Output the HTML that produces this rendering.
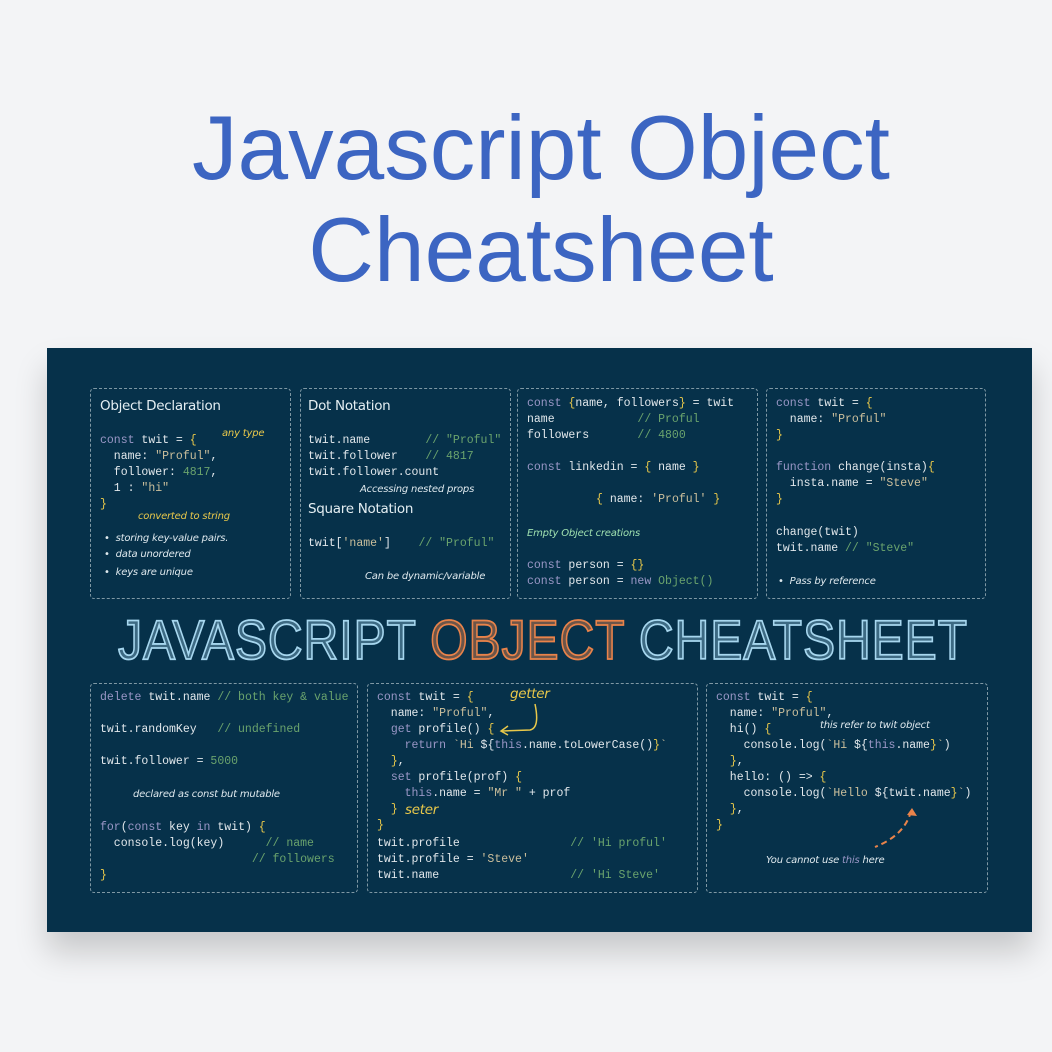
<!DOCTYPE html>
<html><head><meta charset="utf-8">
<style>
*{margin:0;padding:0;box-sizing:border-box}
body{width:1052px;height:1052px;background:#f3f4f6;position:relative;overflow:hidden;font-family:"Liberation Sans",sans-serif}
.t{position:absolute;left:15px;width:1052px;text-align:center;color:#3c65c2;font-size:91px;line-height:100px;white-space:nowrap}
.panel{position:absolute;left:47px;top:348px;width:985px;height:584px;background:#06314a;box-shadow:0 20px 30px rgba(0,0,0,0.18)}
.b{position:absolute;border:1.5px dashed #7f98a4;border-radius:4px}
.l{position:absolute;font-family:"Liberation Mono",monospace;font-size:11.5px;line-height:16px;color:#e2e8ec;white-space:pre}
.k{color:#9a97c6}.s{color:#cbbf9c}.c{color:#6aa36d}.y{color:#e8c84a}
.h{position:absolute;font-family:"DejaVu Sans",sans-serif;font-style:italic;font-size:10px;line-height:14px;color:#dfe9ee;white-space:pre;letter-spacing:-0.2px}
.hd{position:absolute;font-family:"DejaVu Sans",sans-serif;font-size:13.5px;color:#e4eef2;white-space:pre;letter-spacing:-0.3px}
.big{position:absolute;left:118px;top:610px;font-family:"Liberation Sans Narrow","Liberation Sans",sans-serif;font-size:56px;line-height:60px;color:rgba(167,215,239,0.35);-webkit-text-stroke:1.8px #a7d7ef;white-space:nowrap;letter-spacing:1px;transform-origin:0 0}
</style></head><body>
<div class="t" style="top:99px">Javascript Object</div>
<div class="t" style="top:201px">Cheatsheet</div>

<div class="panel"></div>
<div class="b" style="left:90px;top:388px;width:201px;height:211px"></div>
<div class="b" style="left:300px;top:388px;width:211px;height:211px"></div>
<div class="b" style="left:517px;top:388px;width:241px;height:211px"></div>
<div class="b" style="left:766px;top:388px;width:220px;height:211px"></div>
<div class="b" style="left:90px;top:683px;width:268px;height:210px"></div>
<div class="b" style="left:367px;top:683px;width:331px;height:210px"></div>
<div class="b" style="left:706px;top:683px;width:282px;height:210px"></div>

<!-- box1 -->
<div class="hd" style="left:100px;top:398px">Object Declaration</div>
<div class="l" style="left:100px;top:433px"><span class="k">const</span> twit = <span class="y">{</span></div>
<div class="l" style="left:100px;top:449px">  name: <span class="s">"Proful"</span>,</div>
<div class="l" style="left:100px;top:465px">  follower: <span class="c">4817</span>,</div>
<div class="l" style="left:100px;top:481px">  1 : <span class="s">"hi"</span></div>
<div class="l" style="left:100px;top:497px"><span class="y">}</span></div>
<div class="h y" style="left:222px;top:427px;color:#e8c84a">any type</div>
<div class="h" style="left:138px;top:510px;color:#e8c84a">converted to string</div>
<div class="h" style="left:104px;top:532px">•  storing key-value pairs.</div>
<div class="h" style="left:104px;top:548px">•  data unordered</div>
<div class="h" style="left:104px;top:566px">•  keys are unique</div>

<!-- box2 -->
<div class="hd" style="left:308px;top:398px">Dot Notation</div>
<div class="l" style="left:308px;top:433px">twit.name        <span class="c">// "Proful"</span></div>
<div class="l" style="left:308px;top:449px">twit.follower    <span class="c">// 4817</span></div>
<div class="l" style="left:308px;top:465px">twit.follower.count</div>
<div class="h" style="left:360px;top:483px">Accessing nested props</div>
<div class="hd" style="left:308px;top:501px">Square Notation</div>
<div class="l" style="left:308px;top:536px">twit[<span class="s">'name'</span>]    <span class="c">// "Proful"</span></div>
<div class="h" style="left:365px;top:570px">Can be dynamic/variable</div>

<!-- box3 -->
<div class="l" style="left:527px;top:396px"><span class="k">const</span> <span class="y">{</span>name, followers<span class="y">}</span> = twit</div>
<div class="l" style="left:527px;top:412px">name            <span class="c">// Proful</span></div>
<div class="l" style="left:527px;top:428px">followers       <span class="c">// 4800</span></div>
<div class="l" style="left:527px;top:460px"><span class="k">const</span> linkedin = <span class="y">{</span> name <span class="y">}</span></div>
<div class="l" style="left:527px;top:492px">          <span class="y">{</span> name: <span class="s">'Proful'</span> <span class="y">}</span></div>
<div class="h" style="left:527px;top:527px;color:#9fe0b0">Empty Object creations</div>
<div class="l" style="left:527px;top:558px"><span class="k">const</span> person = <span class="y">{}</span></div>
<div class="l" style="left:527px;top:574px"><span class="k">const</span> person = <span class="k">new</span> <span class="c">Object()</span></div>

<!-- box4 -->
<div class="l" style="left:776px;top:396px"><span class="k">const</span> twit = <span class="y">{</span></div>
<div class="l" style="left:776px;top:412px">  name: <span class="s">"Proful"</span></div>
<div class="l" style="left:776px;top:428px"><span class="y">}</span></div>
<div class="l" style="left:776px;top:460px"><span class="k">function</span> change(insta)<span class="y">{</span></div>
<div class="l" style="left:776px;top:476px">  insta.name = <span class="s">"Steve"</span></div>
<div class="l" style="left:776px;top:492px"><span class="y">}</span></div>
<div class="l" style="left:776px;top:525px">change(twit)</div>
<div class="l" style="left:776px;top:541px">twit.name <span class="c">// "Steve"</span></div>
<div class="h" style="left:778px;top:575px">•  Pass by reference</div>

<div class="big" id="big">JAVASCRIPT <span style="-webkit-text-stroke-color:#e9834a;color:rgba(233,131,74,0.45)">OBJECT</span> CHEATSHEET</div>

<!-- bottom box1 -->
<div class="l" style="left:100px;top:690px"><span class="k">delete</span> twit.name <span class="c">// both key &amp; value</span></div>
<div class="l" style="left:100px;top:722px">twit.randomKey   <span class="c">// undefined</span></div>
<div class="l" style="left:100px;top:754px">twit.follower = <span class="c">5000</span></div>
<div class="h" style="left:133px;top:788px">declared as const but mutable</div>
<div class="l" style="left:100px;top:820px"><span class="k">for</span>(<span class="k">const</span> key <span class="k">in</span> twit) <span class="y">{</span></div>
<div class="l" style="left:100px;top:836px">  console.log(key)      <span class="c">// name</span></div>
<div class="l" style="left:100px;top:852px">                      <span class="c">// followers</span></div>
<div class="l" style="left:100px;top:868px"><span class="y">}</span></div>

<!-- bottom box2 -->
<div class="l" style="left:377px;top:690px"><span class="k">const</span> twit = <span class="y">{</span></div>
<div class="hd" style="left:510px;top:686px;color:#e8c84a;font-style:italic">getter</div>
<div class="l" style="left:377px;top:706px">  name: <span class="s">"Proful"</span>,</div>
<div class="l" style="left:377px;top:722px">  <span class="k">get</span> profile() <span class="y">{</span></div>
<div class="l" style="left:377px;top:738px">    <span class="k">return</span> <span class="s">`Hi </span>${<span class="k">this</span>.name.toLowerCase()<span class="y">}</span><span class="s">`</span></div>
<div class="l" style="left:377px;top:754px">  <span class="y">}</span>,</div>
<div class="l" style="left:377px;top:770px">  <span class="k">set</span> profile(prof) <span class="y">{</span></div>
<div class="l" style="left:377px;top:786px">    <span class="k">this</span>.name = <span class="s">"Mr "</span> + prof</div>
<div class="l" style="left:377px;top:802px">  <span class="y">}</span></div>
<div class="hd" style="left:405px;top:802px;color:#e8c84a;font-style:italic">seter</div>
<div class="l" style="left:377px;top:818px"><span class="y">}</span></div>
<div class="l" style="left:377px;top:836px">twit.profile                <span class="c">// 'Hi proful'</span></div>
<div class="l" style="left:377px;top:852px">twit.profile = <span class="s">'Steve'</span></div>
<div class="l" style="left:377px;top:868px">twit.name                   <span class="c">// 'Hi Steve'</span></div>
<svg style="position:absolute;left:490px;top:700px" width="60" height="40"><path d="M45 4 Q50 28 40 30 L12 31" stroke="#e8c84a" stroke-width="1.5" fill="none"/><path d="M18 26 L11 31 L18 35" stroke="#e8c84a" stroke-width="1.5" fill="none"/></svg>

<!-- bottom box3 -->
<div class="l" style="left:716px;top:690px"><span class="k">const</span> twit = <span class="y">{</span></div>
<div class="l" style="left:716px;top:706px">  name: <span class="s">"Proful"</span>,</div>
<div class="h" style="left:820px;top:719px">this refer to twit object</div>
<div class="l" style="left:716px;top:722px">  hi() <span class="y">{</span></div>
<div class="l" style="left:716px;top:738px">    console.log(<span class="s">`Hi </span>${<span class="k">this</span>.name<span class="y">}</span><span class="s">`</span>)</div>
<div class="l" style="left:716px;top:754px">  <span class="y">}</span>,</div>
<div class="l" style="left:716px;top:770px">  hello: () =&gt; <span class="y">{</span></div>
<div class="l" style="left:716px;top:786px">    console.log(<span class="s">`Hello </span>${twit.name<span class="y">}</span><span class="s">`</span>)</div>
<div class="l" style="left:716px;top:802px">  <span class="y">}</span>,</div>
<div class="l" style="left:716px;top:818px"><span class="y">}</span></div>
<svg style="position:absolute;left:865px;top:805px" width="60" height="50"><path d="M46 6 Q40 30 10 42" stroke="#e9834a" stroke-width="2" fill="none" stroke-dasharray="6 4"/><path d="M42 10 L47 3 L52 11 Z" fill="#e9834a"/></svg>
<div class="h" style="left:766px;top:854px">You cannot use <span class="k">this</span> here</div>
<script>
var b=document.getElementById('big');var w=b.getBoundingClientRect().width;b.style.transform='scaleX('+(850/w)+')';
</script>
</body></html>
